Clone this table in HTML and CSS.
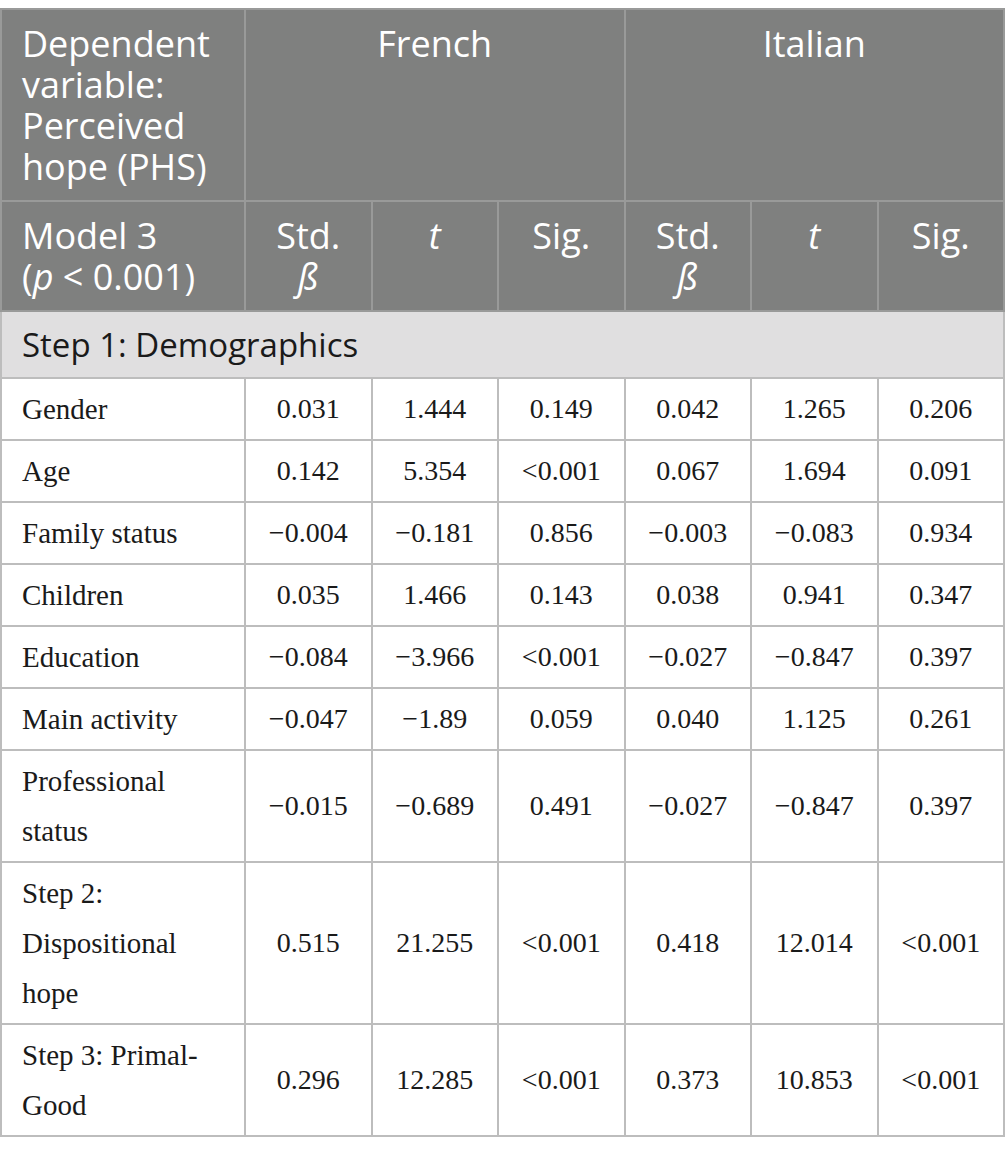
FILE: index.html
```html
<!DOCTYPE html>
<html lang="en">
<head>
    <meta charset="UTF-8">
    <title>Perceived hope regression</title>
    <link rel="stylesheet" href="styles.css">
</head>
<body>

<table class="results">
    <colgroup>
        <col class="col-label">
        <col span="6" class="col-value">
    </colgroup>
    <thead>
        <tr>
            <th class="label">Dependent variable: Perceived hope (PHS)</th>
            <th colspan="3">French</th>
            <th colspan="3">Italian</th>
        </tr>
        <tr>
            <th class="label">Model 3<br>(<i>p</i> &lt; 0.001)</th>
            <th>Std.<br><i>ß</i></th>
            <th><i>t</i></th>
            <th>Sig.</th>
            <th>Std.<br><i>ß</i></th>
            <th><i>t</i></th>
            <th>Sig.</th>
        </tr>
    </thead>
    <tbody>
        <tr class="section">
            <td colspan="7">Step 1: Demographics</td>
        </tr>
        <tr>
            <td class="label">Gender</td>
            <td>0.031</td><td>1.444</td><td>0.149</td>
            <td>0.042</td><td>1.265</td><td>0.206</td>
        </tr>
        <tr>
            <td class="label">Age</td>
            <td>0.142</td><td>5.354</td><td>&lt;0.001</td>
            <td>0.067</td><td>1.694</td><td>0.091</td>
        </tr>
        <tr>
            <td class="label">Family status</td>
            <td>−0.004</td><td>−0.181</td><td>0.856</td>
            <td>−0.003</td><td>−0.083</td><td>0.934</td>
        </tr>
        <tr>
            <td class="label">Children</td>
            <td>0.035</td><td>1.466</td><td>0.143</td>
            <td>0.038</td><td>0.941</td><td>0.347</td>
        </tr>
        <tr>
            <td class="label">Education</td>
            <td>−0.084</td><td>−3.966</td><td>&lt;0.001</td>
            <td>−0.027</td><td>−0.847</td><td>0.397</td>
        </tr>
        <tr>
            <td class="label">Main activity</td>
            <td>−0.047</td><td>−1.89</td><td>0.059</td>
            <td>0.040</td><td>1.125</td><td>0.261</td>
        </tr>
        <tr>
            <td class="label">Professional status</td>
            <td>−0.015</td><td>−0.689</td><td>0.491</td>
            <td>−0.027</td><td>−0.847</td><td>0.397</td>
        </tr>
        <tr>
            <td class="label">Step 2: Dispositional hope</td>
            <td>0.515</td><td>21.255</td><td>&lt;0.001</td>
            <td>0.418</td><td>12.014</td><td>&lt;0.001</td>
        </tr>
        <tr>
            <td class="label">Step 3: Primal-Good</td>
            <td>0.296</td><td>12.285</td><td>&lt;0.001</td>
            <td>0.373</td><td>10.853</td><td>&lt;0.001</td>
        </tr>
    </tbody>
</table>

</body>
</html>
```

FILE: styles.css
```css
body {
    margin: 0;
    padding-top: 8px;
    background-color: #fff;
}

.results {
    width: 1005px;
    border-collapse: collapse;
    table-layout: fixed;
    border: 2px solid #bdbdbd;
}

.col-label {
    width: 244px;
}

.results th {
    background-color: #7f807f;
    color: #fff;
    font-family: "Open Sans", sans-serif;
    font-weight: normal;
    font-size: 36px;
    line-height: 41px;
    padding: 13px 6px;
    text-align: center;
    vertical-align: top;
    border: 2px solid #999a99;
}

.results th.label {
    text-align: left;
    padding-left: 20px;
}

.results td {
    font-family: "Liberation Serif", serif;
    font-size: 28px;
    line-height: 50px;
    color: #1a1a1a;
    padding: 5px 6px;
    text-align: center;
    vertical-align: middle;
    border: 2px solid #bdbdbd;
}

.results td.label {
    font-size: 29px;
    text-align: left;
    padding-left: 20px;
    padding-right: 20px;
}

.results tr.section td {
    background-color: #e0dfe0;
    font-family: "Open Sans", sans-serif;
    font-size: 33px;
    line-height: 41px;
    padding: 12px 20px;
    text-align: left;
}
```
